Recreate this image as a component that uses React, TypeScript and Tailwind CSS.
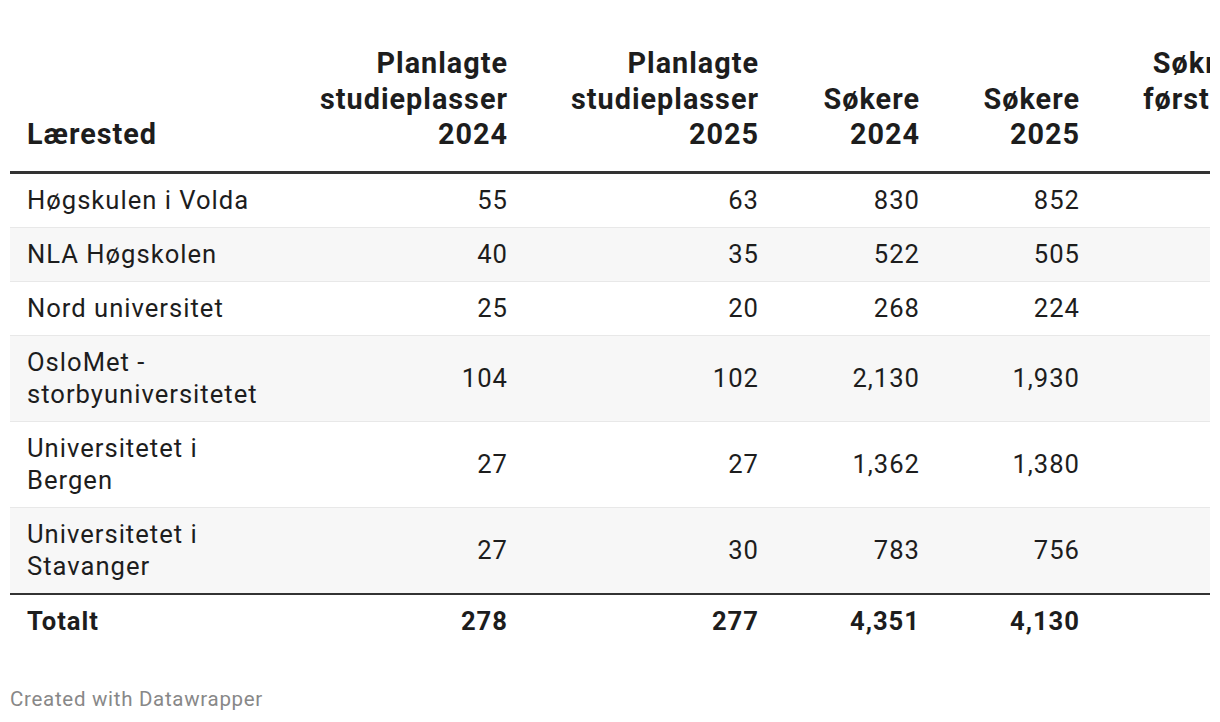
import React from 'react';

type Row = {
  name: React.ReactNode;
  values: string[];
};

const rows: Row[] = [
  { name: 'Høgskulen i Volda', values: ['55', '63', '830', '852', '412'] },
  { name: 'NLA Høgskolen', values: ['40', '35', '522', '505', '198'] },
  { name: 'Nord universitet', values: ['25', '20', '268', '224', '87'] },
  { name: <>OsloMet -<br />storbyuniversitetet</>, values: ['104', '102', '2,130', '1,930', '640'] },
  { name: <>Universitetet i<br />Bergen</>, values: ['27', '27', '1,362', '1,380', '520'] },
  { name: <>Universitetet i<br />Stavanger</>, values: ['27', '30', '783', '756', '301'] },
];

const totals = ['278', '277', '4,351', '4,130', '2,158'];

const th = 'align-bottom font-bold text-[28.8px] leading-[35.5px] tracking-[1px] pl-[17px] pr-[16px] pb-[18px] whitespace-nowrap';
const td = 'align-middle text-[25.6px] leading-[32px] tracking-[1px] pl-[17px] pr-[16px] py-[10.5px] whitespace-nowrap';

export default function App() {
  return (
    <div
      className="w-[1220px] h-[722px] bg-white text-[#1d1d1d] overflow-hidden"
      style={{ fontFamily: 'Roboto, "Liberation Sans", sans-serif' }}
    >
      <div className="mx-[10px] pt-[46px] overflow-hidden">
        <table className="table-fixed border-collapse w-[1290px]">
          <colgroup>
            <col className="w-[280px]" />
            <col className="w-[234px]" />
            <col className="w-[251px]" />
            <col className="w-[161px]" />
            <col className="w-[160px]" />
            <col className="w-[204px]" />
          </colgroup>
          <thead>
            <tr className="border-b-[3px] border-[#333]">
              <th className={th + ' text-left'}>Lærested</th>
              <th className={th + ' text-right'}>
                Planlagte<br />studieplasser<br />2024
              </th>
              <th className={th + ' text-right'}>
                Planlagte<br />studieplasser<br />2025
              </th>
              <th className={th + ' text-right'}>
                Søkere<br />2024
              </th>
              <th className={th + ' text-right'}>
                Søkere<br />2025
              </th>
              <th className={th + ' text-right'}>
                Søknader<br />førstevalg<br />2025
              </th>
            </tr>
          </thead>
          <tbody>
            {rows.map((r, i) => (
              <tr
                key={i}
                className={
                  (i % 2 === 1 ? 'bg-[#f7f7f7] ' : 'bg-white ') +
                  (i === rows.length - 1 ? 'border-b-2 border-[#333]' : 'border-b border-[#e8e8e8]')
                }
              >
                <td className={td + ' text-left'}>{r.name}</td>
                {r.values.map((v, j) => (
                  <td key={j} className={td + ' text-right'}>
                    {v}
                  </td>
                ))}
              </tr>
            ))}
            <tr>
              <td className={td + ' text-left font-bold'}>Totalt</td>
              {totals.map((v, j) => (
                <td key={j} className={td + ' text-right font-bold'}>
                  {v}
                </td>
              ))}
            </tr>
          </tbody>
        </table>
        <div className="mt-[39px] text-[20.5px] leading-[24px] tracking-[0.7px] text-[#888]">Created with Datawrapper</div>
      </div>
    </div>
  );
}
